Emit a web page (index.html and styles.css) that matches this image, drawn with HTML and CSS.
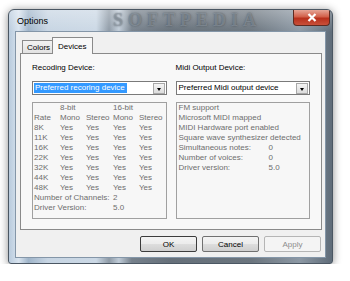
FILE: index.html
```html
<!DOCTYPE html>
<html lang="en">
<head>
    <meta charset="UTF-8">
    <title>Options</title>
    <link rel="stylesheet" href="styles.css">
</head>
<body>

    <div class="window">
        <div class="titlebar">
            <span class="title">Options</span>
            <span class="watermark">SOFTPEDIA</span>
            <span class="close">
                <svg width="10" height="9" viewBox="0 0 10 9"><path d="M1.5 1 L8.5 8 M8.5 1 L1.5 8" stroke="#fff" stroke-width="2.2"/></svg>
            </span>
        </div>

        <div class="client">
            <div class="tabs">
                <div class="tab">Colors</div>
                <div class="tab active">Devices</div>
            </div>

            <div class="page">
                <div class="group">
                    <div class="label">Recoding Device:</div>
                    <div class="combo">
                        <span class="value selected">Preferred recoring device</span>
                        <span class="arrow"></span>
                    </div>
                    <div class="listbox rates">
                        <span></span><span>8-bit</span><span></span><span>16-bit</span><span></span>
                        <span>Rate</span><span>Mono</span><span>Stereo</span><span>Mono</span><span>Stereo</span>
                        <span>8K</span><span>Yes</span><span>Yes</span><span>Yes</span><span>Yes</span>
                        <span>11K</span><span>Yes</span><span>Yes</span><span>Yes</span><span>Yes</span>
                        <span>16K</span><span>Yes</span><span>Yes</span><span>Yes</span><span>Yes</span>
                        <span>22K</span><span>Yes</span><span>Yes</span><span>Yes</span><span>Yes</span>
                        <span>32K</span><span>Yes</span><span>Yes</span><span>Yes</span><span>Yes</span>
                        <span>44K</span><span>Yes</span><span>Yes</span><span>Yes</span><span>Yes</span>
                        <span>48K</span><span>Yes</span><span>Yes</span><span>Yes</span><span>Yes</span>
                        <span class="wide">Number of Channels:</span><span class="rest">2</span>
                        <span class="wide">Driver Version:</span><span class="rest">5.0</span>
                    </div>
                </div>

                <div class="group">
                    <div class="label">Midi Output Device:</div>
                    <div class="combo">
                        <span class="value">Preferred Midi output device</span>
                        <span class="arrow"></span>
                    </div>
                    <div class="listbox midi">
                        <span class="full">FM support</span>
                        <span class="full">Microsoft MIDI mapped</span>
                        <span class="full">MIDI Hardware port enabled</span>
                        <span class="full">Square wave synthesizer detected</span>
                        <span>Simultaneous notes:</span><span>0</span>
                        <span>Number of voices:</span><span>0</span>
                        <span>Driver version:</span><span>5.0</span>
                    </div>
                </div>
            </div>

            <div class="buttons">
                <button class="btn default">OK</button>
                <button class="btn">Cancel</button>
                <button class="btn" disabled>Apply</button>
            </div>
        </div>
    </div>

</body>
</html>
```

FILE: styles.css
```css
* {
    box-sizing: border-box;
}
body {
    margin: 0;
    background: #fff;
    font-family: "Liberation Sans", Arial, sans-serif;
    font-size: 8px;
    color: #000;
}
.window {
    position: relative;
    width: 325px;
    height: 255px;
    margin: 9px 0 0 8px;
    padding: 0 6px 5px 6px;
    display: flex;
    flex-direction: column;
    border: 1px solid #4b5763;
    border-radius: 6px 6px 3px 3px;
    overflow: hidden;
    background:
        linear-gradient(180deg, rgba(255,255,255,0.3) 0, rgba(255,255,255,0) 22px),
        linear-gradient(90deg, #b9cbdd 0, #d9e4ef 3%, #9fb4c9 6%, #c7d5e3 12%, #cbd8e5 27%, #8e9aa6 31%, #c0ccd8 34%, #76818c 38%, #66707a 50%, #6b757e 75%, #8c98a4 90%, #5f6c79 100%);
    box-shadow: 0 1px 9px rgba(0, 0, 0, 0.45);
}
.titlebar {
    height: 21px;
    display: flex;
    align-items: center;
    justify-content: space-between;
}
.title {
    margin-left: 2px;
    font-size: 9px;
    color: #000;
}
.watermark {
    position: absolute;
    left: 104px;
    top: 0;
    font-family: "Liberation Serif", serif;
    font-weight: bold;
    font-size: 18px;
    line-height: 20px;
    letter-spacing: 5px;
    color: rgba(150, 160, 170, 0.55);
    text-shadow: 0 0 2px rgba(40, 48, 56, 0.6);
}
.close {
    position: relative;
    width: 37px;
    height: 16px;
    margin-right: -4px;
    margin-top: -5px;
    display: flex;
    align-items: center;
    justify-content: center;
    border: 1px solid #5e2a20;
    border-top: none;
    border-radius: 0 0 4px 4px;
    background: linear-gradient(180deg, #e6a596 0, #d2604a 45%, #b8301c 55%, #c9503a 100%);
}
.client {
    position: relative;
    flex: 1;
    display: flex;
    flex-direction: column;
    background: #f0f0f0;
    border: 1px solid #8496a8;
    padding: 5px 3px 5px 4px;
}
.tabs {
    display: flex;
    align-items: flex-end;
    height: 16px;
    margin-left: 2px;
    position: relative;
    z-index: 1;
}
.tab {
    height: 13px;
    padding: 0 4px;
    display: flex;
    align-items: center;
    border: 1px solid #8a8a8a;
    border-bottom: none;
    background: linear-gradient(180deg, #f2f2f2, #e2e2e2);
}
.tab:first-child {
    width: 30px;
    border-right: none;
}
.tab.active {
    height: 17px;
    width: 41px;
    padding: 0 5px;
    margin-bottom: -1px;
    background: #f8f8f8;
}
.page {
    flex: 1;
    display: flex;
    gap: 9px;
    padding: 9px 11px 0 11px;
    background: #f8f8f8;
    border: 1px solid #8a8a8a;
}
.group {
    width: 135px;
    display: flex;
    flex-direction: column;
}
.label {
    height: 10px;
    line-height: 10px;
}
.combo {
    height: 14px;
    margin-top: 8px;
    display: flex;
    align-items: center;
    padding: 0 1px;
    background: #fff;
    border: 1px solid #7a7a7a;
}
.value {
    flex: 1;
    line-height: 10px;
    padding-left: 1px;
}
.value.selected {
    flex: none;
    background: #3399ff;
    color: #fff;
    padding-right: 2px;
}
.arrow {
    width: 12px;
    height: 11px;
    margin-left: auto;
    border: 1px solid #a8a8a8;
    background: linear-gradient(180deg, #f4f4f4, #dcdcdc);
    position: relative;
}
.arrow::after {
    content: "";
    position: absolute;
    left: 3px;
    top: 4px;
    border-left: 2.5px solid transparent;
    border-right: 2.5px solid transparent;
    border-top: 3px solid #000;
}
.listbox {
    height: 117px;
    margin-top: 7px;
    padding: 0 1px 0 1px;
    background: #f7f7f7;
    border: 1px solid #a0a0a0;
    color: #6d6d6d;
    line-height: 10px;
    display: grid;
    align-content: start;
}
.rates {
    grid-template-columns: 26px 26px 27px 26px auto;
}
.rates .wide {
    grid-column: 1 / 4;
}
.rates .rest {
    grid-column: 4 / 6;
}
.midi {
    padding-left: 2px;
    grid-template-columns: 90px auto;
}
.midi .full {
    grid-column: 1 / 3;
}
.buttons {
    display: flex;
    justify-content: flex-end;
    gap: 5px;
    margin-top: 6px;
    padding-right: 1px;
}
.btn {
    width: 57px;
    height: 16px;
    padding: 0;
    font-family: "Liberation Sans", Arial, sans-serif;
    font-size: 8px;
    color: #000;
    border: 1px solid #707070;
    border-radius: 2px;
    background: linear-gradient(180deg, #f4f4f4 0, #ebebeb 50%, #dddddd 51%, #cfcfcf 100%);
}
.btn.default {
    border-color: #3c3c3c;
}
.btn:disabled {
    color: #8d8d8d;
    border-color: #b5b5b5;
    background: #f4f4f4;
}
```
